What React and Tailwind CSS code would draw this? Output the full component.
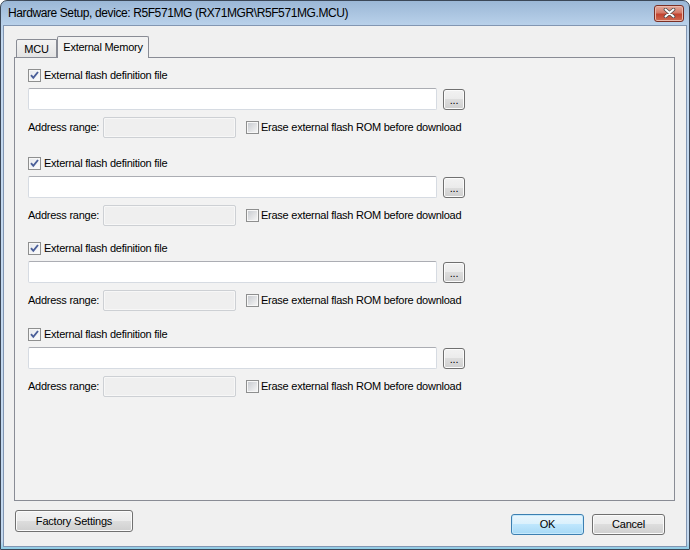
function Checkbox({ checked }) {
  return (
    <span className="relative w-[13px] h-[13px] shrink-0 border border-[#8e8f8f] bg-[#f7f7f7] p-[1px] flex">
      <span
        className={
          checked
            ? "flex-1 bg-[linear-gradient(135deg,#e8eaee,#fbfbfb)]"
            : "flex-1 bg-[linear-gradient(135deg,#c9ccd1,#f4f4f4)]"
        }
      />
      {checked && (
        <svg className="absolute left-[0px] top-[0px]" width="11" height="11" viewBox="0 0 11 11">
          <path d="M2 5.2 L4.3 7.8 L9 2" fill="none" stroke="#4b5f99" strokeWidth="1.9" />
        </svg>
      )}
    </span>
  );
}

function Button({ children, className = "", primary = false }) {
  return (
    <button
      type="button"
      className={`flex items-center justify-center rounded-[3px] border text-[11px] tracking-[-0.2px] text-black ${
        primary
          ? "border-[#3c7fb1] bg-[linear-gradient(to_bottom,#eaf6fd_0%,#d9f0fc_50%,#bee6fd_50%,#a7d9f5_100%)] shadow-[inset_0_0_0_1px_#c6e9fc]"
          : "border-[#707070] bg-[linear-gradient(to_bottom,#f2f2f2_0%,#ebebeb_50%,#dddddd_50%,#cfcfcf_100%)] shadow-[inset_0_0_0_1px_#fbfbfb]"
      } ${className}`}
    >
      {children}
    </button>
  );
}

const groups = ["mt-0", "mt-[17px]", "mt-[14px]", "mt-[15px]"];

function FlashGroup({ spacing }) {
  return (
    <div className={`flex flex-col ${spacing}`}>
      <div className="h-[16px] flex items-center">
        <Checkbox checked />
        <span className="ml-[3px]">External flash definition file</span>
      </div>
      <div className="mt-[5px] flex items-center">
        <div className="w-[409px] h-[22px] bg-white border border-[#d6dbe2] border-t-[#abadb3] rounded-[2px]" />
        <Button className="ml-[6px] w-[22px] h-[21px] items-end pb-[3px] leading-none">...</Button>
      </div>
      <div className="mt-[7px] h-[21px] flex items-center">
        <span className="w-[75px]">Address range:</span>
        <div className="w-[133px] h-[21px] bg-[#efefef] border border-[#cdd0d4] rounded-[2px] shadow-[inset_0_0_0_1px_#f7f7f7]" />
        <span className="ml-[10px] flex items-center">
          <Checkbox />
          <span className="ml-[2px]">Erase external flash ROM before download</span>
        </span>
      </div>
    </div>
  );
}

export default function App() {
  return (
    <div className="w-[690px] h-[550px] flex flex-col border border-[#3b4757] rounded-t-[7px] bg-[linear-gradient(to_bottom,#9bb7d6_0px,#b9d1ea_24px,#c3d8ee_40px,#c3d8ee_540px,#7fc8e2_550px)] px-[2px] pb-[2px] font-['Liberation_Sans',Arial,sans-serif] text-black">
      <div className="h-[24px] flex items-center justify-between pl-[5px] pr-[3px]">
        <span className="text-[12px] tracking-[-0.4px]">
          Hardware Setup, device: R5F571MG (RX71MGR\R5F571MG.MCU)
        </span>
        <span className="w-[30px] h-[17px] rounded-[3px] border border-[#7a2f25] bg-[linear-gradient(to_bottom,#e3a99b_0%,#d47a68_45%,#c2432f_55%,#cf6b52_100%)] shadow-[inset_0_0_0_1px_#eab9ad] flex items-center justify-center">
          <svg width="13" height="10" viewBox="0 0 13 10">
            <path d="M2.5 1.5 L10.5 8.5 M10.5 1.5 L2.5 8.5" stroke="#4a4a4a" strokeWidth="3.6" strokeLinecap="round" />
            <path d="M2.5 1.5 L10.5 8.5 M10.5 1.5 L2.5 8.5" stroke="#ffffff" strokeWidth="2" strokeLinecap="round" />
          </svg>
        </span>
      </div>

      <div className="flex-1 flex flex-col bg-[#f0f0f0] border border-[#8296b2] pt-[10px] text-[11px] tracking-[-0.25px]">
        <div className="relative z-10 -mb-[1px] ml-[12px] flex items-end h-[22px]">
          <div className="w-[41px] h-[19px] border border-[#898c95] rounded-tl-[2px] bg-[linear-gradient(to_bottom,#f3f3f3,#e4e4e4)] flex items-center justify-center pt-[1px]">
            MCU
          </div>
          <div className="w-[92px] h-[22px] border border-b-0 border-[#898c95] rounded-t-[2px] bg-[#f2f2f2] flex items-center justify-center pb-[1px]">
            External Memory
          </div>
        </div>

        <div className="ml-[10px] w-[661px] h-[444px] border border-[#898c95] bg-[#f2f2f2] pl-[13px] pt-[9px]">
          {groups.map((g, i) => (
            <FlashGroup key={i} spacing={g} />
          ))}
        </div>

        <div className="flex items-start mt-[9px] ml-[11px] mr-[21px]">
          <Button className="w-[118px] h-[22px]">Factory Settings</Button>
          <div className="ml-auto mt-[4px] flex gap-[8px]">
            <Button primary className="w-[73px] h-[21px]">OK</Button>
            <Button className="w-[73px] h-[21px]">Cancel</Button>
          </div>
        </div>
      </div>
    </div>
  );
}
